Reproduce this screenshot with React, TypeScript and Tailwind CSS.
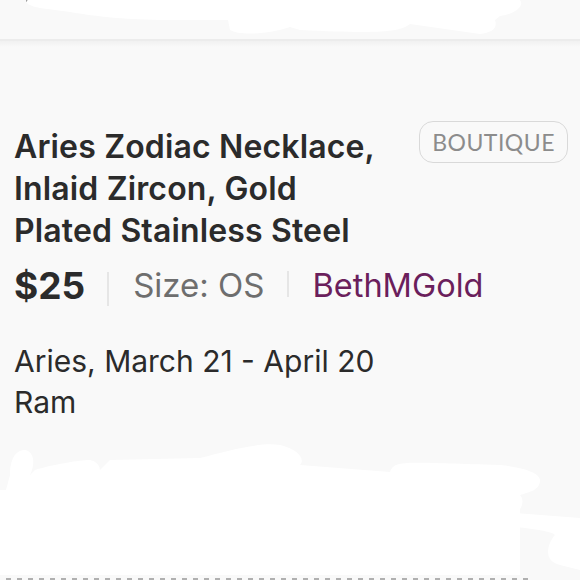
import React from "react";

export default function App() {
  return (
    <div className="relative w-[580px] h-[580px] overflow-hidden bg-[#f9f9f9] text-[#2b2b2b]" style={{ fontFamily: "Inter, 'Noto Sans', sans-serif" }}>
      {/* top bar with redaction */}
      <div className="relative h-[41px] border-b-2 border-[#ececec]">
        <div className="absolute left-[26px] top-0 flex gap-[14px]">
          {Array.from({ length: 14 }).map((_, i) => (
            <div key={i} className="w-[10px] h-[2px] bg-[#9a9a9a]" />
          ))}
        </div>
        <svg className="absolute inset-0" width="580" height="41" viewBox="0 0 580 41">
          <path d="M28 0 H520 C525 6 515 14 500 16 L495 20 C498 28 492 33 480 34 L410 24 C400 32 380 34 300 30 L290 27 C270 34 240 36 230 30 L228 20 L160 20 C120 19 100 17 70 12 L40 8 C28 6 24 2 28 0 Z" fill="#ffffff" />
        </svg>
      </div>
      <div className="h-[6px] bg-gradient-to-b from-[#f1f1f1] to-[#f9f9f9]" />

      <div className="px-[14px] pt-[79px]">
        <div className="flex items-start justify-between">
          <h1 className="text-[32px] leading-[42px] font-semibold w-[385px] tracking-[0.15px]">
            Aries Zodiac Necklace, Inlaid Zircon, Gold Plated Stainless Steel
          </h1>
          <div className="mt-[-5px] mr-[-2px] h-[42px] px-[12px] flex items-center rounded-[14px] border border-[#d9d9d9] text-[23px] text-[#8c8c8c]" style={{ fontFamily: "Lato, sans-serif" }}>
            <span className="tracking-[0.5px]">BOUTIQUE</span>
          </div>
        </div>

        <div className="flex items-center mt-[12px] h-[44px]">
          <span className="text-[37px] font-bold">$25</span>
          <span className="ml-[22px] mr-[24px] w-[2px] h-[34px] bg-[#e6e6e6] mt-[6px]" />
          <span className="text-[33px] text-[#6e6e6e]">Size: OS</span>
          <span className="ml-[22px] mr-[24px] w-[2px] h-[26px] bg-[#e6e6e6] mt-[-4px]" />
          <span className="text-[32.5px] text-[#6b1f5c]">BethMGold</span>
        </div>

        <div className="mt-[33px] text-[30px] leading-[41px]">
          <div>Aries, March 21 - April 20</div>
          <div>Ram</div>
        </div>
      </div>

      {/* bottom redaction */}
      <svg className="absolute left-0 top-[430px]" width="580" height="150" viewBox="0 0 580 150">
        <path d="M10 90 C2 80 3 70 6 60 L10 45 C10 30 15 20 25 20 C35 22 35 35 30 45 L35 40 C50 35 80 30 90 30 C100 32 100 40 100 40 L110 30 L200 28 C230 20 260 12 280 15 C300 20 305 30 300 35 L390 42 C395 30 400 32 500 35 C530 38 540 45 540 50 C540 60 530 62 520 65 C525 70 522 80 515 83 L580 88 V140 L560 135 C540 130 550 110 555 105 C550 100 520 98 500 95 L492 85 C488 80 485 78 490 75 L490 140 H5 C5 130 8 125 6 120 C8 110 10 100 10 90 Z" fill="#ffffff" />
        <rect x="0" y="60" width="520" height="85" fill="#ffffff" />
      </svg>
      <div className="absolute left-[6px] bottom-0 flex gap-[6px]">
        {Array.from({ length: 48 }).map((_, i) => (
          <div key={i} className="w-[5px] h-[2px] bg-[#b0b0b0]" />
        ))}
      </div>
    </div>
  );
}
